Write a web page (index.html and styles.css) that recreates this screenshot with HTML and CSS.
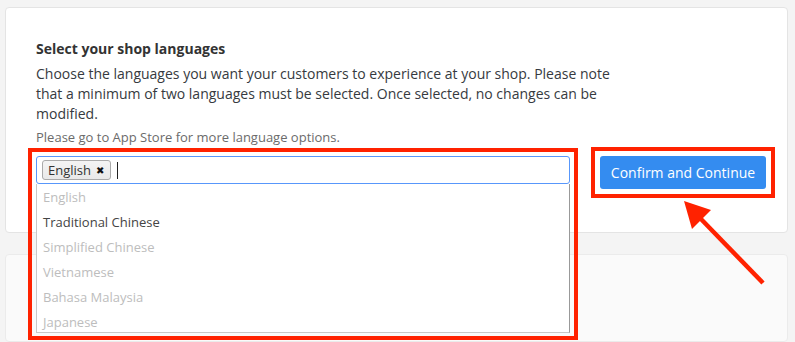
FILE: index.html
```html
<!DOCTYPE html>
<html lang="en">
<head>
    <meta charset="UTF-8">
    <meta name="viewport" content="width=device-width, initial-scale=1.0">
    <title>Shop Languages</title>
    <link rel="stylesheet" href="styles.css">
</head>
<body>
    <div class="card">
        <h3 class="card-title">Select your shop languages</h3>
        <p class="card-text">Choose the languages you want your customers to experience at your shop. Please note that a minimum of two languages must be selected. Once selected, no changes can be modified.</p>
        <p class="card-hint">Please go to App Store for more language options.</p>

        <div class="lang-row">
            <div class="lang-select">
                <div class="choices">
                    <span class="choice">English <span class="choice-close">&#10006;</span></span>
                    <span class="caret"></span>
                </div>
                <ul class="drop">
                    <li class="off">English</li>
                    <li>Traditional Chinese</li>
                    <li class="off">Simplified Chinese</li>
                    <li class="off">Vietnamese</li>
                    <li class="off">Bahasa Malaysia</li>
                    <li class="off">Japanese</li>
                </ul>
            </div>
            <div class="mark-btn">
                <button class="btn-confirm">Confirm and Continue</button>
            </div>
        </div>
    </div>

    <div class="card card-next"></div>

    <!-- annotation arrow -->
    <svg class="arrow" width="795" height="342" viewBox="0 0 795 342">
        <line x1="763" y1="283" x2="700" y2="218" stroke="#ff2200" stroke-width="4.5"/>
        <polygon points="684,201 692,229 711,210" fill="#ff2200"/>
    </svg>
</body>
</html>
```

FILE: styles.css
```css
html {
    overflow: hidden;
}
body {
    margin: 0;
    padding: 7px 7px 0 5px;
    background-color: #f4f4f4;
    font-family: "Open Sans", Arial, sans-serif;
    color: #363a40;
    overflow: hidden;
    height: 342px;
    box-sizing: border-box;
}
.card {
    background: #fff;
    border: 1px solid #e4e4e4;
    border-radius: 4px;
    padding: 31px 21px 43px 30px;
}
.card-title {
    margin: 0 0 5px 0;
    font-size: 14px;
    line-height: 20px;
    font-weight: 700;
    color: #333;
}
.card-text {
    margin: 0;
    font-size: 14px;
    line-height: 20px;
    max-width: 585px;
}
.card-hint {
    margin: 4px 0 0 0;
    font-size: 13px;
    line-height: 18px;
    color: #6b6b6b;
}
.lang-row {
    display: flex;
    align-items: flex-start;
    gap: 30px;
    margin-top: 10px;
}
.lang-select {
    position: relative;
    flex: none;
    width: 534px;
    height: 28px;
}
/* red annotation frame round the open select */
.lang-select::after {
    content: "";
    position: absolute;
    left: -8px;
    right: -8px;
    top: -8px;
    height: 184px;
    border: 4px solid #ff2200;
    z-index: 3;
}
.choices {
    height: 28px;
    box-sizing: border-box;
    border: 1px solid #5897fb;
    border-radius: 3px;
    background: #fff;
    display: flex;
    align-items: center;
    padding: 0 5px;
    gap: 6px;
}
.choice {
    display: inline-flex;
    align-items: center;
    height: 20px;
    box-sizing: border-box;
    padding: 0 6px 0 5px;
    border: 1px solid #aaa;
    border-radius: 3px;
    background: linear-gradient(#f4f4f4, #e9e9e9);
    font-size: 13px;
    color: #333;
    gap: 5px;
}
.choice-close {
    font-family: "DejaVu Sans", sans-serif;
    font-size: 10px;
    color: #111;
}
.caret {
    width: 1px;
    height: 17px;
    background: #222;
}
.drop {
    position: absolute;
    top: 28px;
    left: 0;
    right: 0;
    z-index: 2;
    list-style: none;
    margin: 0;
    padding: 1px 0 0 6px;
    border: 1px solid #c8c8c8;
    border-right-color: #999;
    border-top: 0;
    background: #fff;
    height: 147px;
    overflow: hidden;
    font-size: 13px;
}
.drop li {
    height: 25px;
    line-height: 25px;
    color: #444;
}
.drop li.off {
    color: #bdbdbd;
}
.mark-btn {
    flex: none;
    outline: 4px solid #ff2200;
    outline-offset: 5px;
}
.btn-confirm {
    display: block;
    width: 166px;
    height: 33px;
    border: 0;
    border-radius: 3px;
    background: #348cf0;
    color: #fff;
    font-family: "Open Sans", Arial, sans-serif;
    font-size: 14px;
    padding: 0;
}
.card-next {
    margin-top: 21px;
    background: #fafafa;
    border-color: #ebebeb;
    height: 86px;
    padding: 0;
}
.arrow {
    position: absolute;
    left: 0;
    top: 0;
    pointer-events: none;
}
```
